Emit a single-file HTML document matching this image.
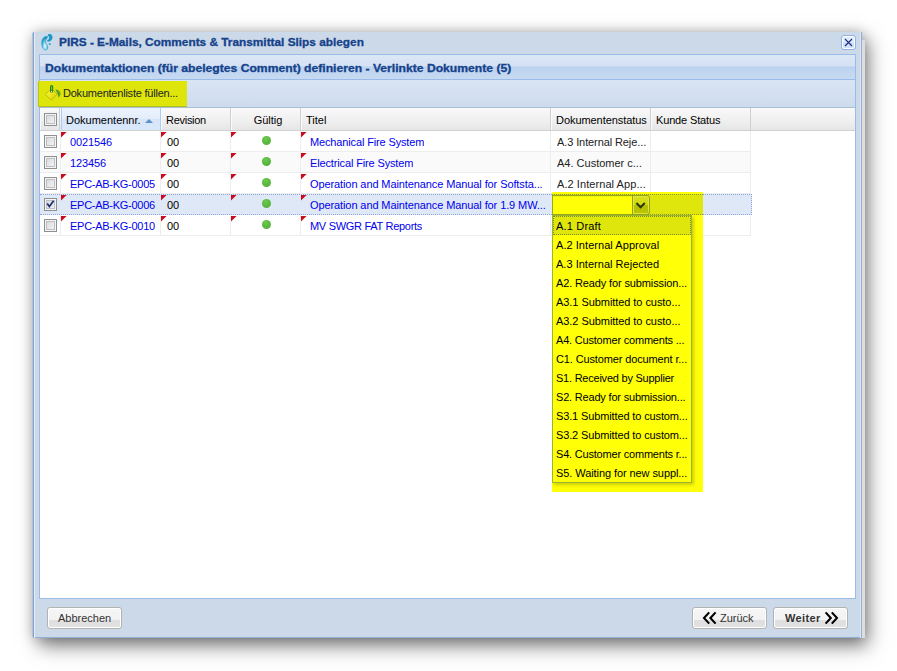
<!DOCTYPE html>
<html lang="de">
<head>
<meta charset="utf-8">
<title>PIRS - E-Mails, Comments &amp; Transmittal Slips ablegen</title>
<style>
html,body{margin:0;padding:0;}
body{width:897px;height:671px;overflow:hidden;background:#fff;position:relative;font-family:"Liberation Sans",sans-serif;font-size:11px;color:#000;}
.abs{position:absolute;}
#win{left:33px;top:32px;width:829px;height:606px;background:#ccd9e8;box-sizing:border-box;border-left:1px solid #86a2cc;border-right:1px solid #8fafd8;border-bottom:1px solid #8fafd8;box-shadow:6px 8px 18px rgba(0,0,0,.5), 0 0 12px rgba(0,0,0,.22);}
#strip{left:862px;top:40px;width:3px;height:598px;background:#dedede;}
#title{-webkit-text-stroke:0.3px #15428b;left:58.6px;top:34px;height:16px;line-height:16px;font-weight:bold;font-size:11px;transform:scaleX(1.075);transform-origin:0 0;color:#15428b;white-space:nowrap;}
#close{left:841px;top:35px;width:15px;height:15px;border:1px solid #8fb3e4;border-radius:3px;background:linear-gradient(#e2edfb 0%,#dce9fa 48%,#cbdef6 52%,#d6e5f9 100%);box-sizing:border-box;box-shadow:inset 0 0 0 1px #fff;}
#panel{left:39px;top:54px;width:817px;height:545px;border:1px solid #99bbe8;box-sizing:border-box;background:#fff;}
#phead{left:40px;top:55px;width:815px;height:24px;background:linear-gradient(#dce7f6 0%,#d5e2f4 45%,#bcd2ef 50%,#c8daf2 100%);border-bottom:1px solid #99bbe8;}
#ptitle{-webkit-text-stroke:0.3px #15428b;left:45px;top:61px;height:14px;line-height:14px;font-weight:bold;font-size:11px;transform:scaleX(1.104);transform-origin:0 0;color:#15428b;white-space:nowrap;}
#tbar{left:40px;top:80px;width:815px;height:27px;background:linear-gradient(#dae5f3 0%,#cddbee 100%);border-bottom:1px solid #a9bfd3;}
#hl1{left:38px;top:81px;width:149px;height:26px;background:#dde50b;border-left:1px solid #b5c41a;border-bottom:1px solid #b2bf1c;box-sizing:border-box;}
#tbtxt{left:63px;top:86px;height:14px;line-height:14px;font-size:11px;letter-spacing:-0.22px;color:#222;white-space:nowrap;}
#ghead{left:40px;top:108px;width:815px;height:22px;background:linear-gradient(#f9f9f9 0%,#efefef 60%,#e6e6e6 100%);border-bottom:1px solid #d0d0d0;}
.hc{top:108px;height:22px;line-height:24px;font-size:11px;color:#000;white-space:nowrap;box-sizing:border-box;border-right:1px solid #d0d0d0;border-left:1px solid #fafafa;padding-left:4px;overflow:hidden;}
.row{left:40px;width:711px;height:21px;box-sizing:border-box;border-bottom:1px solid #ededed;background:#fff;}
.row.alt{background:#fafafa;}
.row.sel{background:#dfe8f6;border-top:1px dotted #8ea6db;border-bottom:1px dotted #8ea6db;border-right:1px dotted #8ea6db;}
.row.sel .c{top:0;}
.row.sel .dirty{top:0;}
.row.sel .chk{margin-top:-1px;}
.row.sel .dot{margin-top:-1px;}
.c{position:absolute;top:1px;height:20px;line-height:20px;font-size:11px;letter-spacing:-0.1px;white-space:nowrap;overflow:hidden;}
.blue{color:#0000ee;}
.chk{position:absolute;left:4px;width:13px;height:13px;box-sizing:border-box;border:1px solid #8e8f8f;background:linear-gradient(135deg,#d0d3d6 0%,#e6e7e9 50%,#f7f7f7 100%);box-shadow:inset 0 0 0 1px #f4f4f4, inset 0 0 0 2px #bcbfc3;}
.dirty{position:absolute;width:6px;height:6px;background:#cc0a1e;clip-path:polygon(0 0,5.6px 0,0 5.6px);top:1px;}
.dot{position:absolute;width:9.4px;height:9.4px;border-radius:50%;background:radial-gradient(circle at 42% 30%,#6acb4c 0%,#5cb940 45%,#56b23a 80%,#62c248 100%);top:4.7px;left:221.8px;}
#foot{left:33px;top:599px;width:828px;height:38px;}
.btn{top:607px;height:22px;box-sizing:border-box;border:1px solid #b3b3b3;border-radius:3px;background:linear-gradient(#f6f6f6 0%,#f2f2f2 58%,#dfdfdf 62%,#e2e2e2 100%);box-shadow:inset 0 0 0 1px #fff;font-size:11px;color:#333;white-space:nowrap;}
.bt{position:absolute;top:0;line-height:20px;height:20px;}
#list{left:552px;top:215px;width:140px;height:268px;box-sizing:border-box;border:1px solid #9ab52e;background:#ffff08;box-shadow:2px 2px 3px rgba(130,130,0,.38);}
#hl2{left:552px;top:192px;width:151px;height:300px;background:#ffff08;}
#hl3{left:552px;top:194px;width:151px;height:21px;background:#dfe60c;border-top:1px dotted #8d9a3a;border-bottom:1px dotted #8d9a3a;box-sizing:border-box;}
.li{position:absolute;left:0;width:138px;height:19px;line-height:21px;font-size:11px;letter-spacing:-0.13px;color:#000;padding-left:3px;white-space:nowrap;overflow:hidden;box-sizing:border-box;}

.vl{position:absolute;top:0;width:1px;height:20px;background:#ededed;}
.row.sel .vl{display:none;}
#hsort{background:linear-gradient(#ebf3fd 0%,#e3edfa 50%,#d6e5f8 52%,#d9e8fb 100%);border-right:1px solid #aaccf6;border-left:1px solid #aaccf6;}
#sortarrow{display:inline-block;width:0;height:0;border-left:4px solid transparent;border-right:4px solid transparent;border-bottom:4px solid #5f8fc9;margin-left:4px;vertical-align:1px;}
#combo{left:552px;top:195px;width:81px;height:20px;box-sizing:border-box;border:1px solid #97a81c;border-right:none;background:#ffff08;box-shadow:inset 0 1px 0 #f1f408;}
#trig{left:632px;top:195px;width:18px;height:20px;box-sizing:border-box;border:1px solid #8fa31a;border-radius:0 3px 3px 0;background:linear-gradient(#d9e01e 0%,#d2da18 50%,#b6c102 52%,#b9c404 100%);box-shadow:inset 0 0 0 1px #e4ea34;}
#trig svg{position:absolute;left:-1px;top:-1px;}
.li.first{background:#dfe60c;border:1px dotted #7d9030;line-height:19px;padding-left:2px;}
</style>
</head>
<body>
<div id="win" class="abs"></div>
<div id="strip" class="abs"></div>
<div class="abs" style="left:32px;top:33px;width:1px;height:604px;background:#b3c3d9"></div>
<div class="abs" style="left:34px;top:32px;width:1px;height:606px;background:#e6edf6"></div>
<div class="abs" style="left:860px;top:32px;width:1px;height:606px;background:#dde6f2"></div>
<svg class="abs" style="left:39px;top:33px" width="16" height="20" viewBox="39 33 16 20">
<defs><radialGradient id="g1" cx="0.55" cy="0.72" r="0.6"><stop offset="0" stop-color="#ffffff"/><stop offset="0.35" stop-color="#9adcf0"/><stop offset="1" stop-color="#1b97c6"/></radialGradient></defs>
<path d="M46.6 36.3 C44 36.2 41.6 39.5 41.7 43.2 C41.8 46.8 43.6 50.2 45.6 50.1 C47.6 50 48.2 47.6 47.3 45.6 C46.5 43.8 45.3 42.8 45.6 40.8 C45.8 39.3 47.2 38.3 47.6 37.3 C47.8 36.7 47.4 36.3 46.6 36.3 Z" fill="url(#g1)" stroke="#1590c0" stroke-width="0.5"/>
<path d="M49 34 C51.4 33.6 52.8 35.6 52.5 37.8 C52.2 40.2 50 42 47.6 41.6 C46.9 41.4 47 40.6 47.6 40.1 C48.9 39.2 49.4 38.2 49 37 C48.7 36.1 47.9 35.7 47.8 35 C47.8 34.5 48.3 34.1 49 34 Z" fill="#1b98c8"/>
<circle cx="49.8" cy="44.1" r="1.05" fill="#2aa5d2"/>
</svg>
<div id="title" class="abs">PIRS - E-Mails, Comments &amp; Transmittal Slips ablegen</div>
<div id="close" class="abs"><svg width="13" height="13" viewBox="0 0 13 13" style="position:absolute;left:0;top:0"><path d="M3 3 L10 10 M10 3 L3 10" stroke="#1f2f80" stroke-width="1.15" fill="none"/></svg></div>
<div id="panel" class="abs"></div>
<div id="phead" class="abs"></div>
<div id="ptitle" class="abs">Dokumentaktionen (für abelegtes Comment) definieren - Verlinkte Dokumente (5)</div>
<div id="tbar" class="abs"></div>
<div id="hl1" class="abs"></div>
<svg class="abs" style="left:44px;top:84px" width="18" height="18" viewBox="44 84 18 18">
<defs><linearGradient id="g2" x1="0" y1="0" x2="1" y2="1"><stop offset="0" stop-color="#fbf64a"/><stop offset="0.5" stop-color="#ece51c"/><stop offset="1" stop-color="#c8c00c"/></linearGradient></defs>
<path d="M51.4 88.6 L57.4 94 L51.4 100.3 L45.4 94.4 Z" fill="url(#g2)" stroke="#bdb40c" stroke-width="0.8"/>
<path d="M55.4 89.8 C58.8 89.2 60.8 92 60.6 94.6 L58.6 97.8 L57.8 94.6 C57.4 92.8 56.6 91.6 55.4 89.8 Z" fill="#4c9a1a"/>
<path d="M57 90.6 C58.8 91 59.8 92.6 59.8 94.4 L58.8 95.8" fill="none" stroke="#7cba3a" stroke-width="0.8"/>
<rect x="50" y="85" width="3.2" height="7.8" rx="1.6" fill="#2f7f12"/>
<rect x="51.1" y="86" width="1" height="4.6" rx="0.5" fill="#86c646"/>
<circle cx="51.6" cy="91.7" r="0.8" fill="#f2f2a0"/>
</svg>
<div id="tbtxt" class="abs">Dokumentenliste füllen...</div>
<div id="ghead" class="abs"></div>
<div class="abs hc" style="left:40px;width:20px"><span class="chk" style="left:3px;top:5px"></span></div>
<div class="abs hc" id="hsort" style="left:61px;width:100px">Dokumentennr.<span id="sortarrow"></span></div>
<div class="abs hc" style="left:161px;width:70px"><span style="letter-spacing:-0.28px">Revision</span></div>
<div class="abs hc" style="left:231px;width:70px;text-align:center;padding-left:4px">Gültig</div>
<div class="abs hc" style="left:301px;width:250px">Titel</div>
<div class="abs hc" style="left:551px;width:100px"><span style="letter-spacing:-0.06px">Dokumentenstatus</span></div>
<div class="abs hc" style="left:651px;width:100px"><span style="letter-spacing:-0.15px">Kunde Status</span></div>
<div class="abs row " style="top:131px;width:711px"><span class="chk" style="top:4px"></span>
<span class="dirty" style="left:21px"></span><span class="c blue" style="left:30px">0021546</span>
<span class="dirty" style="left:121px"></span><span class="c" style="left:127px">00</span>
<span class="dirty" style="left:191px"></span><span class="dot"></span>
<span class="dirty" style="left:261px"></span><span class="c blue" style="left:270px"><span style="letter-spacing:-0.14px">Mechanical Fire System</span></span>
<span class="c" style="left:517px;color:#222">A.3 Internal Reje...</span>
<span class="vl" style="left:20px"></span><span class="vl" style="left:120px"></span><span class="vl" style="left:190px"></span><span class="vl" style="left:260px"></span><span class="vl" style="left:510px"></span><span class="vl" style="left:610px"></span><span class="vl" style="left:710px"></span>
</div>
<div class="abs row alt" style="top:152px;width:711px"><span class="chk" style="top:4px"></span>
<span class="dirty" style="left:21px"></span><span class="c blue" style="left:30px">123456</span>
<span class="dirty" style="left:121px"></span><span class="c" style="left:127px">00</span>
<span class="dirty" style="left:191px"></span><span class="dot"></span>
<span class="dirty" style="left:261px"></span><span class="c blue" style="left:270px"><span style="letter-spacing:-0.14px">Electrical Fire System</span></span>
<span class="c" style="left:517px;color:#222"><span style="letter-spacing:0.0px">A4. Customer c...</span></span>
<span class="vl" style="left:20px"></span><span class="vl" style="left:120px"></span><span class="vl" style="left:190px"></span><span class="vl" style="left:260px"></span><span class="vl" style="left:510px"></span><span class="vl" style="left:610px"></span><span class="vl" style="left:710px"></span>
</div>
<div class="abs row " style="top:173px;width:711px"><span class="chk" style="top:4px"></span>
<span class="dirty" style="left:21px"></span><span class="c blue" style="left:30px"><span style="letter-spacing:-0.27px">EPC-AB-KG-0005</span></span>
<span class="dirty" style="left:121px"></span><span class="c" style="left:127px">00</span>
<span class="dirty" style="left:191px"></span><span class="dot"></span>
<span class="dirty" style="left:261px"></span><span class="c blue" style="left:270px">Operation and Maintenance Manual for Softsta...</span>
<span class="c" style="left:517px;color:#222"><span style="letter-spacing:0.07px">A.2 Internal App...</span></span>
<span class="vl" style="left:20px"></span><span class="vl" style="left:120px"></span><span class="vl" style="left:190px"></span><span class="vl" style="left:260px"></span><span class="vl" style="left:510px"></span><span class="vl" style="left:610px"></span><span class="vl" style="left:710px"></span>
</div>
<div class="abs row sel" style="top:194px;width:712px"><span class="chk on" style="top:4px"><svg width="11" height="11" viewBox="0 0 11 11" style="position:absolute;left:0;top:0"><path d="M2.2 4.6 L4.4 7.6 L8.6 1.8" fill="none" stroke="#1c2f6e" stroke-width="1.7"/></svg></span>
<span class="dirty" style="left:21px"></span><span class="c blue" style="left:30px"><span style="letter-spacing:-0.27px">EPC-AB-KG-0006</span></span>
<span class="dirty" style="left:121px"></span><span class="c" style="left:127px">00</span>
<span class="dirty" style="left:191px"></span><span class="dot"></span>
<span class="dirty" style="left:261px"></span><span class="c blue" style="left:270px">Operation and Maintenance Manual for 1.9 MW...</span>
<span class="c" style="left:517px;color:#222"></span>
<span class="vl" style="left:20px"></span><span class="vl" style="left:120px"></span><span class="vl" style="left:190px"></span><span class="vl" style="left:260px"></span><span class="vl" style="left:510px"></span><span class="vl" style="left:610px"></span><span class="vl" style="left:710px"></span>
</div>
<div class="abs row " style="top:215px;width:711px"><span class="chk" style="top:4px"></span>
<span class="dirty" style="left:21px"></span><span class="c blue" style="left:30px"><span style="letter-spacing:-0.27px">EPC-AB-KG-0010</span></span>
<span class="dirty" style="left:121px"></span><span class="c" style="left:127px">00</span>
<span class="dirty" style="left:191px"></span><span class="dot"></span>
<span class="dirty" style="left:261px"></span><span class="c blue" style="left:270px"><span style="letter-spacing:-0.29px">MV SWGR FAT Reports</span></span>
<span class="c" style="left:517px;color:#222"></span>
<span class="vl" style="left:20px"></span><span class="vl" style="left:120px"></span><span class="vl" style="left:190px"></span><span class="vl" style="left:260px"></span><span class="vl" style="left:510px"></span><span class="vl" style="left:610px"></span><span class="vl" style="left:710px"></span>
</div>
<div id="hl2" class="abs"></div>
<div id="hl3" class="abs"></div>
<div id="combo" class="abs"></div>
<div id="trig" class="abs"><svg width="18" height="20" viewBox="632 195 18 20"><path d="M636.4 203 L640.6 207.2 L644.8 203" fill="none" stroke="#2b3a08" stroke-width="2.1"/></svg></div>
<div id="list" class="abs">
<div class="li first" style="top:0px"><span style="letter-spacing:0.18px">A.1 Draft</span></div>
<div class="li" style="top:19px"><span style="letter-spacing:0.05px">A.2 Internal Approval</span></div>
<div class="li" style="top:38px"><span style="letter-spacing:0.02px">A.3 Internal Rejected</span></div>
<div class="li" style="top:57px">A2. Ready for submission...</div>
<div class="li" style="top:76px"><span style="letter-spacing:-0.06px">A3.1 Submitted to custo...</span></div>
<div class="li" style="top:95px"><span style="letter-spacing:-0.06px">A3.2 Submitted to custo...</span></div>
<div class="li" style="top:114px"><span style="letter-spacing:-0.2px">A4. Customer comments ...</span></div>
<div class="li" style="top:133px">C1. Customer document r...</div>
<div class="li" style="top:152px"><span style="letter-spacing:-0.23px">S1. Received by Supplier</span></div>
<div class="li" style="top:171px"><span style="letter-spacing:-0.19px">S2. Ready for submission...</span></div>
<div class="li" style="top:190px">S3.1 Submitted to custom...</div>
<div class="li" style="top:209px">S3.2 Submitted to custom...</div>
<div class="li" style="top:228px"><span style="letter-spacing:-0.2px">S4. Customer comments r...</span></div>
<div class="li" style="top:247px"><span style="letter-spacing:-0.08px">S5. Waiting for new suppl...</span></div>
</div>
<div class="abs btn" style="left:47px;width:75px"><span class="bt" style="left:10px">Abbrechen</span></div>
<div class="abs btn" style="left:692px;width:75px"><svg width="16" height="14" viewBox="702 611 16 14" style="position:absolute;left:9px;top:3px"><path d="M709.2 612.4 L704 618 L709.2 623.6 M715.6 612.4 L710.4 618 L715.6 623.6" fill="none" stroke="#000" stroke-width="2.1"/></svg><span class="bt" style="left:27px">Zurück</span></div>
<div class="abs btn" style="left:773px;width:75px"><span class="bt" style="left:11px;font-weight:bold;letter-spacing:0.38px">Weiter</span><svg width="16" height="14" viewBox="824 611 16 14" style="position:absolute;left:50px;top:3px"><path d="M825.6 612.4 L830.8 618 L825.6 623.6 M831.8 612.4 L837 618 L831.8 623.6" fill="none" stroke="#000" stroke-width="2.1"/></svg></div>
</body>
</html>
